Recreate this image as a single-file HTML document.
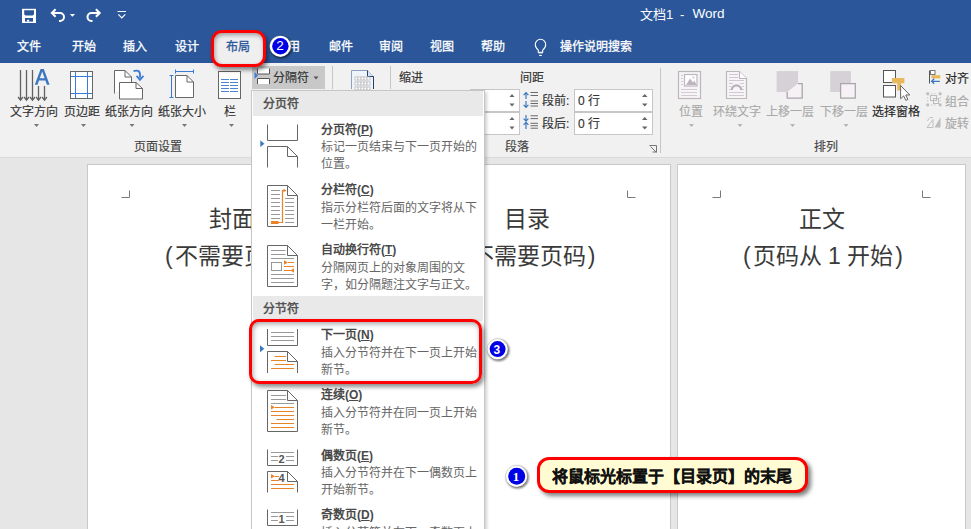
<!DOCTYPE html>
<html lang="zh-CN"><head><meta charset="utf-8"><style>
*{box-sizing:border-box}
html,body{margin:0;padding:0}
body{width:971px;height:529px;overflow:hidden;position:relative;background:#e6e6e6;font-family:"Liberation Sans",sans-serif;}
.a{position:absolute}
.t{position:absolute;white-space:nowrap;line-height:1}
#title{left:0;top:0;width:971px;height:63px;background:#2b579a}
.tab{color:#fff;font-size:12px;top:41px;-webkit-text-stroke:0.3px #fff}
#ribbon{left:0;top:63px;width:971px;height:95px;background:#f1f1f1;border-bottom:1px solid #d9d9d9}
.rl{font-size:12px;color:#333;-webkit-text-stroke:0.15px currentColor}
.dis{color:#a9a9a9}
.dd{width:0;height:0;border-left:2.5px solid transparent;border-right:2.5px solid transparent;border-top:3px solid #777}
.page{background:#fff;border:1px solid #c9c9c9;top:164px;height:400px}
.mk{position:absolute;width:9px;height:8px;border-color:#7a7a7a;border-style:solid;border-width:0}
.doc{font-size:23px;color:#3a3a3a}
#menu{left:251px;top:89.5px;width:234px;height:450px;background:#fff;border:1px solid #c6c6c6;box-shadow:2px 2px 3px rgba(0,0,0,.18)}
.mh{position:absolute;left:1px;width:230px;height:25px;background:#e9e9e9}
.mht{position:absolute;left:10px;top:7px;font-size:12px;font-weight:bold;color:#555;line-height:1;white-space:nowrap}
.mit{font-size:12px;font-weight:bold;color:#4a4a4a;left:69px}
.mid{font-size:12px;color:#666;left:69px;line-height:17px}
</style></head><body>

<div class="a" id="title"></div>
<!-- QAT -->
<svg class="a" style="left:0;top:0" width="140" height="30" viewBox="0 0 140 30">
  <rect x="22" y="8.8" width="14" height="14.2" fill="#fff"/>
  <path d="M24.2 10.2h9.8v3.6a1.6 1.6 0 0 1-1.6 1.6h-6.6a1.6 1.6 0 0 1-1.6-1.6z" fill="#2b579a"/>
  <rect x="25" y="18" width="8" height="3.6" fill="#2b579a"/>
  <rect x="27" y="19.8" width="2.2" height="1.8" fill="#fff"/>
  <path d="M51.8 13H60A4 4 0 0 1 60 21H59" fill="none" stroke="#fff" stroke-width="2"/>
  <path d="M55.6 9.2L51.8 13L55.6 16.8" fill="none" stroke="#fff" stroke-width="2"/>
  <path d="M69.8 14h5.2l-2.6 2.8z" fill="#fff"/>
  <path d="M99.7 13H91.5A4 4 0 0 0 91.5 21H92.5" fill="none" stroke="#fff" stroke-width="2"/>
  <path d="M95.9 9.2L99.7 13L95.9 16.8" fill="none" stroke="#fff" stroke-width="2"/>
  <path d="M117.5 11.5h8.5" stroke="#fff" stroke-width="1"/>
  <path d="M118.3 14.3l3.5 3.6l3.5-3.6" fill="none" stroke="#fff" stroke-width="1.1"/>
</svg>
<div class="t" style="left:640px;top:7.5px;font-size:13px;color:#fff">文档1</div>
<div class="t" style="left:680px;top:7.5px;font-size:13px;color:#fff">-</div>
<div class="t" style="left:692.5px;top:6.5px;font-size:13.5px;color:#fff">Word</div>

<!-- tabs -->
<div class="t tab" style="left:17px">文件</div>
<div class="t tab" style="left:72px">开始</div>
<div class="t tab" style="left:123px">插入</div>
<div class="t tab" style="left:175px">设计</div>
<div class="t tab" style="left:276px">引用</div>
<div class="t tab" style="left:329px">邮件</div>
<div class="t tab" style="left:379px">审阅</div>
<div class="t tab" style="left:430px">视图</div>
<div class="t tab" style="left:481px">帮助</div>
<svg class="a" style="left:530px;top:36px" width="22" height="24" viewBox="530 36 22 24">
  <path d="M538.3 52.3v-2.2c-1.8-1.3-3-3.3-3-5.6a5.2 5.2 0 0 1 10.4 0c0 2.3-1.2 4.3-3 5.6v2.2z" fill="none" stroke="#fff" stroke-width="1.1"/>
  <path d="M538.3 52.8h4.4" stroke="#fff" stroke-width="1.1"/>
  <path d="M539.2 55.4h2.6" stroke="#fff" stroke-width="1.2"/>
</svg>
<div class="t tab" style="left:560px">操作说明搜索</div>

<!-- ribbon -->
<div class="a" id="ribbon"></div>
<svg class="a" style="left:0;top:0" width="971" height="160" viewBox="0 0 971 160">
 <g stroke="#616161" stroke-width="1.3" fill="none">
  <path d="M20.5 70v30M26.5 70v30M32.5 70v30M38.5 86v14M44.5 86v14"/>
  <path d="M18.1 97l2.4 3.2l2.4-3.2M24.1 97l2.4 3.2l2.4-3.2M30.1 97l2.4 3.2l2.4-3.2M36.1 97l2.4 3.2l2.4-3.2M42.1 97l2.4 3.2l2.4-3.2"/>
 </g>
 <path d="M34.8 84.8L40.6 68.9h3.2L49.6 84.8h-2.7l-1.5-4.2h-6.4l-1.5 4.2zM39.8 78.3h4.8l-2.4-6.9z" fill="#3b77c0"/>
 <!-- margins -->
 <rect x="70.5" y="71.5" width="22" height="27" fill="#fff" stroke="#666"/>
 <path d="M75.5 72v26M87.5 72v26M71 76.5h21M71 93.5h21" stroke="#3a7bd5" stroke-width="1"/>
 <!-- orientation -->
 <path d="M114.5 93.5V70.5h10.5l6.5 6.5v5" fill="#fff" stroke="#666"/>
 <path d="M125 70.5v6.5h6.5" fill="none" stroke="#666"/>
 <path d="M119.5 82.5h16.5l6.5 6v10.5h-23z" fill="#fff" stroke="#666"/>
 <path d="M136 82.5v6h6.5" fill="none" stroke="#666"/>
 <path d="M133.5 71.2c3-1.2 6.5-.8 6.5 3v3.5" fill="none" stroke="#3a7bd5" stroke-width="1.8"/>
 <path d="M136.6 75.8l3.4 4l3.4-4" fill="none" stroke="#3a7bd5" stroke-width="1.8"/>
 <!-- size -->
 <path d="M175.5 97.5V75.5h11.5l6.5 6.5v15.5z" fill="#fff" stroke="#666"/>
 <path d="M187 75.5v6.5h6.5" fill="none" stroke="#666"/>
 <path d="M175.5 71.5h18M175.5 69.5v4M193.5 69.5v4M171.5 75.5v22M169.5 75.5h4M169.5 97.5h4" stroke="#3a7bd5" stroke-width="1"/>
 <!-- columns -->
 <rect x="218.5" y="71.5" width="22" height="27" fill="#fff" stroke="#666"/>
 <path d="M221 79.5h8M230 79.5h8M221 82.5h8M230 82.5h8M221 85.5h8M230 85.5h8M221 88.5h8M230 88.5h8M221 91.5h8M230 91.5h8" stroke="#4a86d0" stroke-width="1.1"/>
 <g fill="#777">
  <path d="M34 124h5l-2.5 3z"/><path d="M81 124h5l-2.5 3z"/><path d="M129.5 124h5l-2.5 3z"/><path d="M182 124h5l-2.5 3z"/><path d="M229 124h5l-2.5 3z"/>
 </g>
 <!-- group 2 -->
 <rect x="252" y="66" width="73" height="23" fill="#c8c8c8"/>
 <path d="M254.5 72v7l3.5-3.5z" fill="#3a7bd5"/>
 <rect x="257.5" y="69" width="12" height="5" fill="#fff" stroke="#555" stroke-width="0"/>
 <path d="M257.5 68.5v5.5h12v-5.5M257.5 84v-5.5h12v5.5" fill="#fff" stroke="#555"/>
 <path d="M313.5 76.5h5l-2.5 3z" fill="#555"/>
 <path d="M332.5 66v23M390.5 66v23M660.5 68v85" stroke="#c6c6c6"/>
 <path d="M351.5 89V70.5h16l6 6V89" fill="#eef3fa" stroke="#8aa0bd"/>
 <path d="M367.5 70.5v6h6" fill="#d8e4f4" stroke="#27406b"/>
 <path d="M373.5 76.5V89" stroke="#27406b"/>
 <g fill="#fff" stroke="#bbb" stroke-width="0.8">
  <rect x="355" y="77" width="3" height="3"/><rect x="358" y="77" width="3" height="3"/><rect x="361" y="77" width="3" height="3"/><rect x="364" y="77" width="3" height="3"/><rect x="367" y="77" width="3" height="3"/>
  <rect x="355" y="82" width="3" height="3"/><rect x="358" y="82" width="3" height="3"/><rect x="361" y="82" width="3" height="3"/><rect x="364" y="82" width="3" height="3"/><rect x="367" y="82" width="3" height="3"/>
  <rect x="355" y="87" width="3" height="3"/><rect x="358" y="87" width="3" height="3"/><rect x="361" y="87" width="3" height="3"/><rect x="364" y="87" width="3" height="3"/><rect x="367" y="87" width="3" height="3"/>
 </g>
 <!-- spin boxes -->
 <rect x="470.5" y="89.5" width="49" height="22" fill="#fff" stroke="#c6c6c6"/>
 <rect x="470.5" y="112.5" width="49" height="22" fill="#fff" stroke="#c6c6c6"/>
 <rect x="574.5" y="89.5" width="78" height="22" fill="#fff" stroke="#c6c6c6"/>
 <rect x="574.5" y="112.5" width="78" height="22" fill="#fff" stroke="#c6c6c6"/>
 <g fill="#666">
  <path d="M509.5 97h5l-2.5-3z"/><path d="M509.5 103.5h5l-2.5 3z"/>
  <path d="M509.5 120h5l-2.5-3z"/><path d="M509.5 126.5h5l-2.5 3z"/>
  <path d="M642 97h5.5l-2.75-3z"/><path d="M642 103.5h5.5l-2.75 3z"/>
  <path d="M642 120h5.5l-2.75-3z"/><path d="M642 126.5h5.5l-2.75 3z"/>
 </g>
 <g stroke="#3b77c0" stroke-width="1.2" fill="none">
  <path d="M526 92.5v6.5M523.6 95.2l2.4-2.5l2.4 2.5M526 101v6.5M523.6 104.8l2.4 2.5l2.4-2.5"/>
  <path d="M526 115v6M523.6 118.6l2.4 2.5l2.4-2.5M526 122.5v6.5M523.6 124.9l2.4-2.5l2.4 2.5"/>
 </g>
 <g stroke="#6a6a6a" stroke-width="1">
  <path d="M530.5 92.5h7.5M530.5 95.5h7.5M530.5 101h7.5M530.5 103.5h7.5M530.5 106h7.5"/>
  <path d="M530.5 115.8h7.5M530.5 118.6h7.5M530.5 123.3h7.5M530.5 125.7h7.5M530.5 128.2h7.5"/>
 </g>
 <path d="M649.5 145.5h7v7M650.5 146.5l5.5 5.5M652.5 152h4" fill="none" stroke="#777"/>
</svg>
<div class="t rl" style="left:10px;top:106px;">文字方向</div>
<div class="t rl" style="left:64px;top:106px;">页边距</div>
<div class="t rl" style="left:105px;top:106px;">纸张方向</div>
<div class="t rl" style="left:158px;top:106px;">纸张大小</div>
<div class="t rl" style="left:224px;top:106px;">栏</div>
<div class="t rl" style="left:134px;top:141px;color:#444">页面设置</div>
<div class="t rl" style="left:273px;top:72px;">分隔符</div>
<div class="t rl" style="left:399px;top:72px;">缩进</div>
<div class="t rl" style="left:520px;top:72px;">间距</div>
<div class="t rl" style="left:542px;top:95px;">段前:</div>
<div class="t rl" style="left:542px;top:118px;">段后:</div>
<div class="t rl" style="left:578px;top:95px;">0 行</div>
<div class="t rl" style="left:578px;top:118px;">0 行</div>
<div class="t rl" style="left:505px;top:141px;color:#444">段落</div>
<div class="t rl" style="left:814px;top:141px;color:#444">排列</div>


<!-- arrange -->
<svg class="a" style="left:0;top:0" width="971" height="160" viewBox="0 0 971 160">
 <g stroke="#bdb6bd" stroke-width="1.2" fill="#f7f4f7">
  <rect x="678.5" y="71.5" width="22" height="27"/>
  <rect x="684.5" y="74.5" width="12.5" height="11.5" fill="#fff"/>
 </g>
 <path d="M686 85l4-6.5l3 4l1.5-2l2 4.5z" fill="#bdb5bd"/>
 <circle cx="693.5" cy="77.5" r="1.3" fill="#e0d8e0"/>
 <path d="M681 75.5h2M681 78.5h2M681 81.5h2M681 84.5h2M681 89.5h16M681 92.5h16M681 95.5h16" stroke="#cdc6cd" stroke-width="0.9"/>
 <path d="M726.5 98.5V71.5h13l7 7v20z" fill="#f7f4f7" stroke="#bdb6bd" stroke-width="1.2"/>
 <path d="M739.5 71.5v7h7" fill="#fff" stroke="#bdb6bd" stroke-width="1.2"/>
 <path d="M729 74.5h9M729 77.5h9M729 80.5h15M729 83.5h4M740 83.5h4M729 86.5h2M742 86.5h2M729 89.5h2M742 89.5h2M729 92.5h15M729 95.5h15" stroke="#cbc4cb" stroke-width="0.9"/>
 <path d="M731.8 90a4.7 4.7 0 0 1 9.4 0" fill="none" stroke="#b8b0b8" stroke-width="2.2"/>
 <rect x="776.6" y="71.1" width="21.4" height="20.9" fill="#d6d1d6"/>
 <path d="M798 83.6h4.2v14.5h-15V92" fill="#f5f1f5" stroke="#aca6ac" stroke-width="1.3"/>
 <rect x="830.2" y="71.1" width="20.8" height="20.9" fill="#d6d1d6"/>
 <rect x="840.6" y="83.6" width="14.7" height="14.5" fill="#f5f1f5" stroke="#aca6ac" stroke-width="1.3"/>
 <g fill="#aaa"><path d="M689 124.2h5l-2.5 2.6z"/><path d="M737.5 124.2h5l-2.5 2.6z"/><path d="M790 124.2h5l-2.5 2.6z"/><path d="M843.5 124.2h5l-2.5 2.6z"/></g>
 <!-- selection pane -->
 <rect x="883.5" y="70.5" width="12" height="12" fill="#fff" stroke="#555"/>
 <rect x="883.5" y="85.5" width="12" height="11.5" fill="#fff" stroke="#555"/>
 <path d="M891.9 77.9h12.5v5.3h-3.3v7.3h-3.9v-7.3h-5.3z" fill="#eab85c"/>
 <path d="M900.6 85.5v13.2l3-2.8l2.3 4.5l2-1l-2.2-4.4h4.1z" fill="#fff" stroke="#666" stroke-width="1"/>
 <!-- align -->
 <path d="M929.5 70.5v13" stroke="#555"/>
 <rect x="930.5" y="70.5" width="4.5" height="4" fill="#fff" stroke="#777"/>
 <rect x="931.5" y="75.2" width="8.8" height="3.2" fill="#eab85c"/>
 <path d="M939.8 81.3h-8.3M934.2 78.8l-2.6 2.5l2.6 2.5" fill="none" stroke="#3b77c0" stroke-width="1.3"/>
 <!-- group -->
 <g fill="#bcbcbc"><rect x="926.3" y="92.4" width="2.8" height="2.8"/><rect x="938.7" y="92.4" width="2.8" height="2.8"/><rect x="926.3" y="103.5" width="2.8" height="2.8"/><rect x="938.7" y="103.5" width="2.8" height="2.8"/></g>
 <path d="M931 93.8h6M931 104.9h6M927.7 97v4.5M940.1 97v4.5" stroke="#c8c8c8" stroke-dasharray="1.5 1.5"/>
 <rect x="930.5" y="95.5" width="6" height="5" fill="none" stroke="#bcbcbc"/>
 <rect x="933.5" y="98.5" width="5" height="5" fill="none" stroke="#bcbcbc"/>
 <!-- rotate -->
 <path d="M927 127.5l6-8v8z" fill="none" stroke="#c0c0c0" stroke-width="1"/>
 <path d="M934.5 127.5l6-10.5v10.5z" fill="#bdbdbd"/>
 <path d="M927.5 121c1-3 3-4 5.5-3.5" fill="none" stroke="#c0c0c0" stroke-width="1"/>
</svg>
<div class="t rl dis" style="left:678.5px;top:106px">位置</div>
<div class="t rl dis" style="left:713px;top:106px">环绕文字</div>
<div class="t rl dis" style="left:766px;top:106px">上移一层</div>
<div class="t rl dis" style="left:819.5px;top:106px">下移一层</div>
<div class="t rl" style="left:872px;top:106px;color:#262626">选择窗格</div>
<div class="t rl" style="left:944.5px;top:73px;color:#262626">对齐</div>
<div class="t rl dis" style="left:944.5px;top:95.5px">组合</div>
<div class="t rl dis" style="left:944.5px;top:118px">旋转</div>

<!-- document -->
<div class="a page" style="left:87px;width:288px"></div>
<div class="a page" style="left:382px;width:289px"></div>
<div class="a page" style="left:677px;width:289px"></div>
<svg class="a" style="left:0;top:0" width="971" height="529" viewBox="0 0 971 529">
 <path d="M121.5 197.5h8v-7M627.5 190.5v7h8M712.5 197.5h8v-7M922.5 190.5v7h8" fill="none" stroke="#7a7a7a"/>
</svg>
<div class="t doc" style="left:208.5px;top:207.5px">封面</div>
<div class="t doc" style="left:165px;top:245px">(<span style="margin-left:2px">不需要页码</span><span style="margin-left:2px">)</span></div>
<div class="t doc" style="left:504px;top:207.5px">目录</div>
<div class="t doc" style="left:461px;top:245px">(<span style="margin-left:2px">不需要页码</span><span style="margin-left:2px">)</span></div>
<div class="t doc" style="left:798.5px;top:207.5px">正文</div>
<div class="t doc" style="left:743px;top:245px">(<span style="margin-left:2px">页码从</span> 1 <span>开始</span><span style="margin-left:2px">)</span></div>
<!-- menu -->
<div class="a" id="menu"></div>
<div class="a mh" style="left:253px;top:90.7px"><div class="mht">分页符</div></div>
<div class="a mh" style="left:253px;top:295.9px"><div class="mht">分节符</div></div>
<svg class="a" style="left:0;top:0" width="971" height="529" viewBox="0 0 971 529">
 <g fill="none" stroke="#666" stroke-width="1">
  <!-- page break -->
  <path d="M267.5 124.5v16h30v-16"/>
  <path d="M267.5 167.5v-21h20l10 10v11M287.5 146.5v10h10"/>
  <!-- column break -->
  <path d="M267.5 185.5h20l10 10v31h-30z" fill="#fff"/>
  <path d="M287.5 185.5v10h10"/>
  <!-- wrap -->
  <path d="M267.5 245.5h20l10 10v31h-30z" fill="#fff"/>
  <path d="M287.5 245.5v10h10"/>
  <!-- next page -->
  <path d="M267.5 329v16.5h30V329"/>
  <path d="M267.5 373v-21.5h20l10 10V373M287.5 351.5v10h10"/>
  <!-- continuous -->
  <path d="M267.5 390.5h20l10 10v31h-30z" fill="#fff"/>
  <path d="M287.5 390.5v10h10"/>
  <!-- even -->
  <path d="M267.5 449.5v16h30v-16"/>
  <path d="M267.5 492.5v-21h20l10 10v11M287.5 471.5v10h10"/>
  <!-- odd -->
  <path d="M267.5 509.5v16h30v-16"/>
 </g>
 <g stroke="#999" stroke-width="1">
  <path d="M271 190.5h9M271 194.5h9M271 198.5h9M271 202.5h9M271 206.5h9M271 210.5h9M271 214.5h9M271 218.5h9"/>
  <path d="M285 198.5h9M285 202.5h9M285 206.5h9M285 210.5h9M285 214.5h9M285 218.5h9M285 222.5h9"/>
  <path d="M271 250.5h14.5M271 254.5h14.5M271 258.5h23M271 274.5h23M271 278.5h23M271 282.5h23"/>
  <path d="M271 332.5h23M271 336.5h23M271 340.5h23"/>
  <path d="M271 395.5h15M271 399.5h15M271 403.5h23"/>
  <path d="M271 452.5h23M271 456.5h7M286 456.5h8M271 460.5h7M286 460.5h8"/>
  <path d="M271 512.5h23M271 516.5h7M286 516.5h8M271 520.5h7M286 520.5h8"/>
 </g>
 <rect x="271.5" y="262.5" width="10" height="8" fill="none" stroke="#999"/>
 <g stroke="#e8832a" stroke-width="1.2" fill="none">
  <path d="M278 222.5h4.5V190.5h2.5"/>
  <path d="M288 262.5h6M284 266.5h10M284 270.5h7"/>
  <path d="M274.5 356.5h11.5M271 360.5h15M274.5 364.5h19.5M271 368.5h23"/>
  <path d="M275 407.5h19M271 411.5h23M271 415.5h23M276.5 419.5h17.5M271 423.5h23M271 427.5h23"/>
  <path d="M275 476.5h4M271 480.5h8M271 484.5h23M271 488.5h23"/>
 </g>
 <rect x="271" y="221" width="7.5" height="3" fill="#e8832a"/>
 <g fill="#e8832a">
  <path d="M284 260.3v4.4l4-2.2z"/><path d="M294 268.3v4.4l-3.5-2.2z"/>
  <path d="M283.5 188.8l3 1.7l-3 1.7z"/>
  <path d="M271 405v4.6l4-2.3z"/>
  <path d="M271 474v4.6l4-2.3z"/>
 </g>
 <g fill="#3b77c0">
  <path d="M260.3 140.3v6.8l4.1-3.4z"/>
  <path d="M260 345.3v6.9l4.3-3.45z"/>
 </g>
 <g fill="#555" font-family="Liberation Sans" font-weight="bold" font-size="11">
  <text x="278.6" y="463.2">2</text><text x="278.4" y="482">4</text><text x="278.6" y="523.2">1</text>
 </g>
</svg>
<div class="t mit" style="left:321px;top:123.5px">分页符(<u>P</u>)</div>
<div class="t mid" style="left:321px;top:139px">标记一页结束与下一页开始的<br>位置。</div>
<div class="t mit" style="left:321px;top:184px">分栏符(<u>C</u>)</div>
<div class="t mid" style="left:321px;top:200px">指示分栏符后面的文字将从下<br>一栏开始。</div>
<div class="t mit" style="left:321px;top:244px">自动换行符(<u>T</u>)</div>
<div class="t mid" style="left:321px;top:260px">分隔网页上的对象周围的文<br>字，如分隔题注文字与正文。</div>
<div class="t mit" style="left:321px;top:328.5px">下一页(<u>N</u>)</div>
<div class="t mid" style="left:321px;top:345px">插入分节符并在下一页上开始<br>新节。</div>
<div class="t mit" style="left:321px;top:389px">连续(<u>O</u>)</div>
<div class="t mid" style="left:321px;top:405px">插入分节符并在同一页上开始<br>新节。</div>
<div class="t mit" style="left:321px;top:449.5px">偶数页(<u>E</u>)</div>
<div class="t mid" style="left:321px;top:465px">插入分节符并在下一偶数页上<br>开始新节。</div>
<div class="t mit" style="left:321px;top:509px">奇数页(<u>D</u>)</div>
<div class="t mid" style="left:321px;top:525px">插入分节符并在下一奇数页上<br>开始新节。</div>
<!-- annotations -->
<div class="a" style="left:211px;top:30px;width:54.5px;height:37px;border:3px solid #f00;border-radius:11px;background:#efefef;box-shadow:2px 3px 4px rgba(0,0,0,.45), inset 1px 2px 4px rgba(0,0,0,.35)"></div>
<div class="t" style="left:226px;top:41px;font-size:12px;color:#2b579a;-webkit-text-stroke:0.3px #2b579a">布局</div>
<svg class="a" style="left:262px;top:30px;overflow:visible" width="40" height="40" viewBox="262 30 40 40">
 <circle cx="281.3" cy="47.5" r="11" fill="rgba(0,0,0,.55)" filter="url(#bl)"/>
 <circle cx="280.3" cy="46.3" r="10.6" fill="#fff" stroke="rgba(0,0,0,.15)" stroke-width=".6"/>
 <circle cx="280.4" cy="46.2" r="8.2" fill="#0000e6"/>
 <defs><filter id="bl" x="-50%" y="-50%" width="200%" height="200%"><feGaussianBlur stdDeviation="1.2"/></filter></defs>
</svg>
<div class="t" style="left:276.3px;top:39.2px;font-size:13.5px;color:#fff">2</div>

<div class="a" style="left:249.2px;top:319.2px;width:232.8px;height:64.8px;border:3.2px solid #f00;border-radius:10px;box-shadow:2px 3px 4px rgba(0,0,0,.45), inset 1px 2px 5px rgba(0,0,0,.35)"></div>
<svg class="a" style="left:480px;top:330px;overflow:visible" width="40" height="40" viewBox="480 330 40 40">
 <circle cx="498.6" cy="350.3" r="10.8" fill="rgba(0,0,0,.55)" filter="url(#bl)"/>
 <circle cx="497.6" cy="349.1" r="10.4" fill="#fff" stroke="rgba(0,0,0,.2)" stroke-width=".6"/>
 <circle cx="497.6" cy="349.1" r="8" fill="#0000e6"/>
</svg>
<div class="t" style="left:493.5px;top:343.5px;font-size:12px;font-weight:bold;color:#fff">3</div>

<svg class="a" style="left:495px;top:455px;overflow:visible" width="40" height="40" viewBox="495 455 40 40">
 <circle cx="517.5" cy="477.4" r="11.2" fill="rgba(0,0,0,.55)" filter="url(#bl)"/>
 <circle cx="516.5" cy="476.2" r="10.8" fill="#fff" stroke="rgba(0,0,0,.2)" stroke-width=".6"/>
 <circle cx="516.7" cy="476.2" r="8.5" fill="#0000e6"/>
</svg>
<div class="t" style="left:512.8px;top:469.8px;font-size:13px;font-weight:bold;color:#fff;font-family:'Liberation Serif'">1</div>
<div class="a" style="left:537px;top:456.7px;width:270.5px;height:36px;border:3px solid #f00;border-radius:12px;background:#fffbd2;box-shadow:3px 3px 4px rgba(0,0,0,.5)"></div>
<div class="t" style="left:552px;top:469px;font-size:16px;font-weight:bold;color:#111;-webkit-text-stroke:0.2px #111">将鼠标光标置于【目录页】的末尾</div>
</body></html>
